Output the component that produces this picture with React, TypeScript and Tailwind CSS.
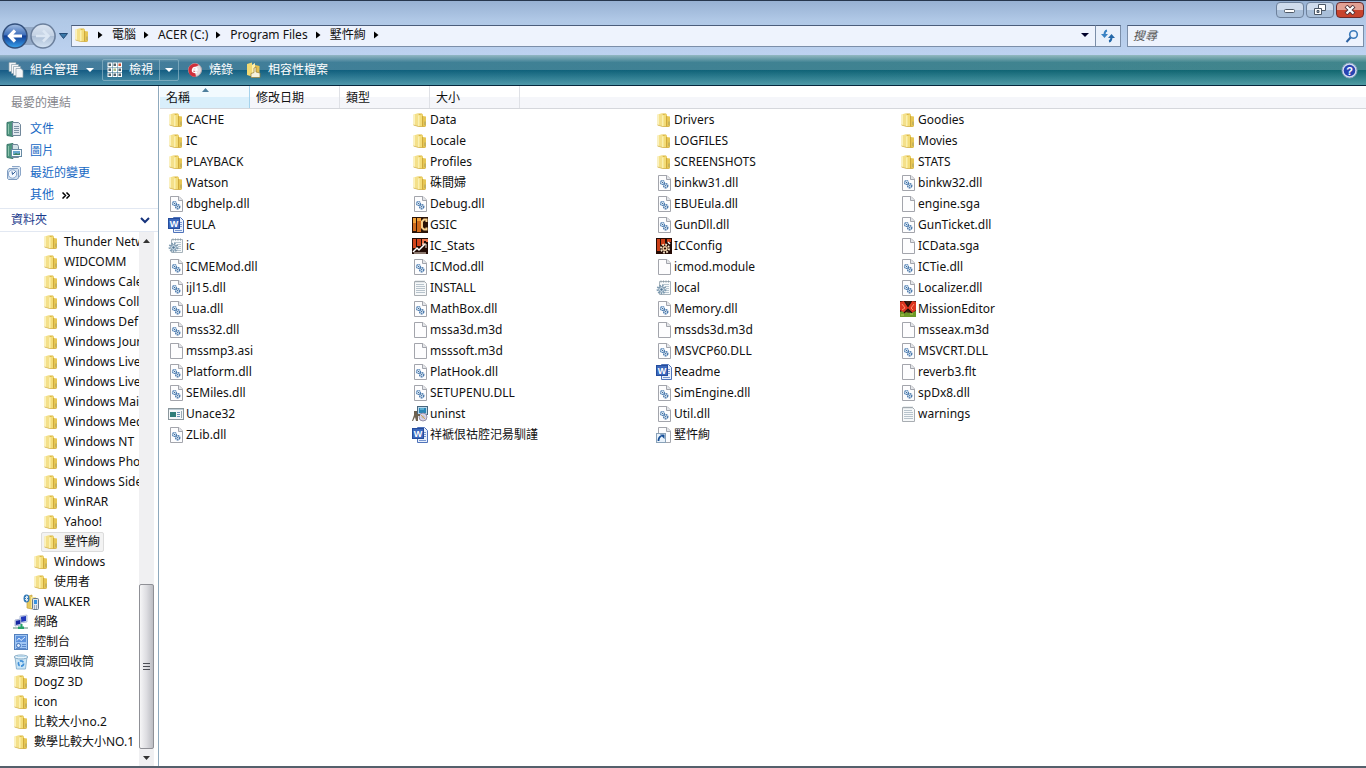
import React from "react";

type Kind =
  | "folder" | "dll" | "blank" | "word" | "config" | "text" | "exe" | "gsic"
  | "stats" | "icconfig" | "mission" | "uninst" | "shortcut"
  | "docs" | "pics" | "recent" | "phone" | "network" | "control" | "bin";

const Page = ({ children }: { children?: React.ReactNode }) => (
  <>
    <path d="M2.500.500h8.500l3.500 3.500v11.500h-12z" fill="#fdfdfe" stroke="#a3a5ac" />
    <path d="M10.500.500v4h4" fill="#e3e6ea" stroke="#a3a5ac" />
    {children}
  </>
);

const drawings: Record<Kind, React.ReactNode> = {
  folder: (
    <>
      <path d="M1.500 2.500 6.500 1v13.500l-5-1.500z" fill="#f4e08a" />
      <path d="M1.500 2.500 3 2v11.400l-1.500-.4z" fill="#fbf2bd" />
      <path d="M6.500 1.500H10L11 3v11H6.500z" fill="#dcb83f" />
      <path d="M6 3.500 10.500 2v13L6 14.500z" fill="#f3dc78" />
      <path d="M6 3.500 7.500 3v11.600L6 14.500z" fill="#fbf0b0" />
      <path d="m10.500 4 3.500.500v9.500l-1.500 1h-2z" fill="#e6c654" />
      <path d="M10.500 4v11" stroke="#c9a235" strokeWidth=".8" />
      <path d="M1.500 13l5 1.500h6l1.500-1" stroke="#d3b250" strokeWidth=".8" />
      <path d="M13 9.500v3.500" stroke="#a8a065" />
    </>
  ),
  dll: (
    <Page>
      <circle cx="6.500" cy="7.500" r="2" fill="#dcebf8" stroke="#5482b4" strokeWidth="1.200" strokeDasharray="1.600 .5" />
      <circle cx="9.700" cy="10.700" r="2.100" fill="#dcebf8" stroke="#4373a8" strokeWidth="1.300" strokeDasharray="1.700 .5" />
      <circle cx="6.500" cy="7.500" r=".6" fill="#28507f" />
      <circle cx="9.700" cy="10.700" r=".6" fill="#28507f" />
    </Page>
  ),
  blank: <Page />,
  word: (
    <>
      <path d="M5.500.500h7l3 3v12h-10z" fill="#e9f0fb" stroke="#4f73ba" />
      <path d="M11 5.500h3M11 7.500h3M11 9.500h3M7 13.500h7" stroke="#7897d1" />
      <rect x=".5" y="1.500" width="11" height="10" fill="#3b68bd" stroke="#254c9c" />
      <text x="1.800" y="9.800" fontFamily="Liberation Sans, sans-serif" fontSize="9" fontWeight="700" fill="#fff">W</text>
    </>
  ),
  config: (
    <>
      <path d="M3.500 1.500h11v13h-11z" fill="#f7fafb" stroke="#a6b2ba" />
      <path d="M5 .5v2M7.500 .5v2M10 .5v2M12.500 .5v2" stroke="#8b9ca6" />
      <path d="M6 4.500h7M9 6.500h4M10 8.500h3M10 10.500h3M9 12.500h4" stroke="#b7c6d0" />
      <circle cx="5.500" cy="9.500" r="4" fill="none" stroke="#7d9ab0" strokeWidth="1.800" strokeDasharray="1.600 1.100" />
      <circle cx="5.500" cy="9.500" r="2.800" fill="#d8e6ef" stroke="#6f8ea6" />
      <circle cx="5.500" cy="9.500" r="1.200" fill="#4d7290" />
    </>
  ),
  text: (
    <>
      <path d="M2.500 1.500h10l2 2v12h-12z" fill="#f6f8f9" stroke="#a8adb2" />
      <path d="M4 .5v2M6 .5v2M8 .5v2M10 .5v2M12 .5v2" stroke="#97a3ab" strokeWidth=".8" />
      <path d="M4 4.500h8M4 6.500h9M4 8.500h9M4 10.500h9M4 12.500h9" stroke="#b7c3cc" />
    </>
  ),
  exe: (
    <>
      <rect x=".5" y="2.500" width="15" height="11" fill="#f4f7f8" stroke="#8a969c" />
      <path d="M1 3.500h14" stroke="#bccbd4" />
      <rect x="2" y="6" width="6" height="5" fill="#2f7d78" />
      <path d="M9 6.500h3M9 8.500h3M9 10.500h3" stroke="#6b93b8" />
      <path d="M13.500 5v7" stroke="#9aaab4" />
    </>
  ),
  gsic: (
    <>
      <path d="M0 0h16v16H0z" fill="#2a1206" />
      <path d="M1 1h3v13H1zM5 1h4v14H5z" fill="#d06a1b" />
      <path d="M1 1h3v5H1zM5 1h4v3H5z" fill="#f3a33a" />
      <path d="M14.500 5V2.500H12L10 4.500v6l2 2h2.500v-2" fill="none" stroke="#f6cf8c" strokeWidth="2" />
    </>
  ),
  stats: (
    <>
      <path d="M0 0h16v16H0z" fill="#220c06" />
      <path d="M1 1h3v9H1zM5 1h4v7H5z" fill="#d3441c" />
      <path d="M15 4V2h-4v5" fill="none" stroke="#e9734a" strokeWidth="2" />
      <path d="m1 14 4-4 2 2 6-6" fill="none" stroke="#fff" strokeWidth="1.500" />
      <path d="M10 6h4v4M2 15h12" fill="none" stroke="#f3e3d5" />
    </>
  ),
  icconfig: (
    <>
      <path d="M0 0h16v16H0z" fill="#240b05" />
      <path d="M1 1h3v12H1zM5 1h4v6H5zM11 1h4v3h-4z" fill="#cc3f18" />
      <circle cx="9" cy="10.500" r="4" fill="none" stroke="#f8e7c8" strokeWidth="2" strokeDasharray="1.800 1.300" />
      <circle cx="9" cy="10.500" r="2.600" fill="#e9c9a0" />
      <circle cx="9" cy="10.500" r="1.100" fill="#240b05" />
      <path d="m12 4 2 2" stroke="#fff" strokeWidth="1.500" />
    </>
  ),
  mission: (
    <>
      <path d="M0 0h16v16H0z" fill="#3d1a0e" />
      <path d="M0 11q3-2 6 0t10-1v6H0z" fill="#6d9a28" />
      <path d="m0 1 4-1 4 6 4-6 4 1v8l-4 3-4-4-3 4-5-3z" fill="#dc3520" />
      <path d="m2 3 3 4-3 2M14 3l-3 4 2 2" fill="none" stroke="#ff8d6a" />
      <path d="m4.500 0 3.500 5.500L11.500 0M4 12l4-4 4 4" fill="none" stroke="#21100b" strokeWidth="1.200" />
      <path d="M1 14h3M10 13h3" stroke="#b9ca55" />
    </>
  ),
  uninst: (
    <>
      <rect x="5.500" y=".5" width="10" height="8" fill="#b8d8ed" stroke="#49677e" />
      <path d="M7 2h7v5H7z" fill="#2b86b6" />
      <path d="M8 3h4" stroke="#8bd6ee" />
      <circle cx="11" cy="11" r="4" fill="#d8d3e8" stroke="#827e98" strokeWidth=".8" />
      <circle cx="11" cy="11" r="1" fill="#fff" stroke="#777" strokeWidth=".5" />
      <path d="M2 5h3v3h3v2H6v5H4l-1-4-2 4H0l2-6z" fill="#6e6250" />
      <path d="m9 9 4 4" stroke="#d2a95b" />
    </>
  ),
  shortcut: (
    <>
      <Page />
      <rect x=".5" y="6.500" width="9" height="9" fill="#e9f2fb" stroke="#8aa2b8" />
      <path d="M2.500 14q0-4 3-5" fill="none" stroke="#174f97" strokeWidth="1.800" />
      <path d="M4 7.500h4.500V12z" fill="#174f97" />
    </>
  ),
  docs: (
    <>
      <path d="M1 1.500 7 .500v15l-6-1z" fill="#4f967f" stroke="#39776a" />
      <path d="M6.500 1.500h6l2 2v11h-8z" fill="#e3eaf1" stroke="#71879a" />
      <path d="M8 5.500h5M8 7.500h5M8 9.500h5M8 11.500h5" stroke="#7f93a5" />
      <path d="M2.500 3v10" stroke="#8dc3ad" />
    </>
  ),
  pics: (
    <>
      <path d="M1 1.500 7 .500v15l-6-1z" fill="#4f967f" stroke="#39776a" />
      <path d="M6.500 1.500h5l1 2v11h-6z" fill="#d4e3e8" stroke="#71879a" />
      <rect x="5.500" y="6.500" width="10" height="7" fill="#f7fbfd" stroke="#688aa3" />
      <path d="M7 8h7v4H7z" fill="#68a6cd" />
      <path d="m7 12 3-2 2 1 2-1v2z" fill="#3d8264" />
      <path d="M2.500 3v10" stroke="#8dc3ad" />
    </>
  ),
  recent: (
    <>
      <path d="M6 1.500h7.500l1 1V10l-3 4" fill="#e0eaf5" stroke="#8ba6c8" />
      <path d="M3 3.500h8.500l1 1v8l-1.500 2H2.500l-1-1v-8z" fill="#cfdeee" stroke="#7f9cc0" />
      <circle cx="6.500" cy="9" r="4.200" fill="#f2f7fd" stroke="#86a4cc" />
      <path d="m6 6.500.5 3 3-3" fill="none" stroke="#315d98" />
    </>
  ),
  phone: (
    <>
      <path d="M4 2.500 9 1v14l-5-1z" fill="#e7ca5f" stroke="#c7a43e" strokeWidth=".7" />
      <path d="M8 3h5v11H8z" fill="#f6e69a" />
      <rect x="9.500" y="4.500" width="6" height="11" rx="1" fill="#dce5ee" stroke="#65788d" />
      <path d="M11 6h3v4h-3z" fill="#3792df" />
      <path d="M11 12h1m1 0h1m-3 2h1m1 0h1" stroke="#5f7183" />
      <ellipse cx="3.500" cy="4.500" rx="3" ry="4" fill="#347ab7" />
      <path d="m2 3 3 3-1.500 1V2L5 3 2 6" fill="none" stroke="#fff" strokeWidth=".8" />
    </>
  ),
  network: (
    <>
      <path d="m7 2 7-1v7l-7 1z" fill="#dfe8f8" stroke="#9aa6cc" strokeWidth=".7" />
      <path d="m8 2.800 5-.8v5l-5 1z" fill="#2137ba" />
      <path d="m2 6 6-1v6l-6 1z" fill="#dbe5f6" stroke="#8f9bc4" strokeWidth=".7" />
      <path d="m2.800 6.800 4.500-.8v4l-4.500 1z" fill="#1426a0" />
      <path d="M0 14h15" stroke="#8eb0a5" strokeWidth="1.500" />
      <path d="M8.500 10v3" stroke="#26a269" strokeWidth="2" />
      <path d="M5 12.500h6V15H5z" fill="#26a269" />
    </>
  ),
  control: (
    <>
      <rect x="1.500" y=".5" width="13" height="15" fill="#9fc5f2" stroke="#5380bd" />
      <path d="M3 2h10v6H3z" fill="#5c91dc" />
      <path d="M4 6.500 6 4l2 2.500L12 3" fill="none" stroke="#e3f0ff" />
      <circle cx="5.500" cy="11.500" r="2" fill="#dbe9fb" stroke="#3d6fb7" />
      <path d="M9 10.500h4M9 12.500h4M3 14.500h10" stroke="#5a88cc" />
    </>
  ),
  bin: (
    <>
      <path d="m2 3 1.500 12h9L14 3z" fill="#cbe5f5" stroke="#8fb5d0" />
      <ellipse cx="8" cy="3" rx="6.800" ry="2" fill="#e8f4fb" stroke="#85aac5" />
      <path d="m3 3 3-2 2 1 3-1 2 2z" fill="#b2d4ea" />
      <circle cx="8" cy="9.500" r="2.600" fill="none" stroke="#3f8fd8" strokeWidth="1.700" strokeDasharray="4 1.400" />
    </>
  ),
};

const Icon = ({ kind }: { kind: Kind }) => (
  <svg className="h-4 w-4 shrink-0" viewBox="0 0 16 16" fill="none" aria-hidden="true">
    {drawings[kind]}
  </svg>
);

const f = (names: string, kind: Kind): Record<string, Kind> =>
  Object.fromEntries(names.split(",").map((n) => [n, kind]));

const special: Record<string, Kind> = {
  ...f("CACHE,Data,Drivers,Goodies,IC,Locale,LOGFILES,Movies,PLAYBACK,Profiles,SCREENSHOTS,STATS,Watson,硃間婦", "folder"),
  ...f("EULA,Readme,祥褫佷祜腔汜昜馴謹", "word"),
  ...f("ic,local", "config"),
  ...f("INSTALL,warnings", "text"),
  GSIC: "gsic",
  IC_Stats: "stats",
  ICConfig: "icconfig",
  MissionEditor: "mission",
  Unace32: "exe",
  uninst: "uninst",
  墅忤絢: "shortcut",
};

const kindOf = (name: string): Kind =>
  special[name] ?? (/\.dll$/i.test(name) ? "dll" : "blank");

const files = [
  "CACHE", "Data", "Drivers", "Goodies",
  "IC", "Locale", "LOGFILES", "Movies",
  "PLAYBACK", "Profiles", "SCREENSHOTS", "STATS",
  "Watson", "硃間婦", "binkw31.dll", "binkw32.dll",
  "dbghelp.dll", "Debug.dll", "EBUEula.dll", "engine.sga",
  "EULA", "GSIC", "GunDll.dll", "GunTicket.dll",
  "ic", "IC_Stats", "ICConfig", "ICData.sga",
  "ICMEMod.dll", "ICMod.dll", "icmod.module", "ICTie.dll",
  "ijl15.dll", "INSTALL", "local", "Localizer.dll",
  "Lua.dll", "MathBox.dll", "Memory.dll", "MissionEditor",
  "mss32.dll", "mssa3d.m3d", "mssds3d.m3d", "msseax.m3d",
  "mssmp3.asi", "msssoft.m3d", "MSVCP60.DLL", "MSVCRT.DLL",
  "Platform.dll", "PlatHook.dll", "Readme", "reverb3.flt",
  "SEMiles.dll", "SETUPENU.DLL", "SimEngine.dll", "spDx8.dll",
  "Unace32", "uninst", "Util.dll", "warnings",
  "ZLib.dll", "祥褫佷祜腔汜昜馴謹", "墅忤絢",
];

const indents = ["pl-[13px]", "pl-[23px]", "pl-[33px]", "pl-[43px]"];

const tree: { name: string; level: number; kind?: Kind; selected?: boolean }[] = [
  { name: "Thunder Netw", level: 3 },
  { name: "WIDCOMM", level: 3 },
  { name: "Windows Cale", level: 3 },
  { name: "Windows Coll", level: 3 },
  { name: "Windows Def", level: 3 },
  { name: "Windows Jour", level: 3 },
  { name: "Windows Live", level: 3 },
  { name: "Windows Live", level: 3 },
  { name: "Windows Mai", level: 3 },
  { name: "Windows Med", level: 3 },
  { name: "Windows NT", level: 3 },
  { name: "Windows Pho", level: 3 },
  { name: "Windows Side", level: 3 },
  { name: "WinRAR", level: 3 },
  { name: "Yahoo!", level: 3 },
  { name: "墅忤絢", level: 3, selected: true },
  { name: "Windows", level: 2 },
  { name: "使用者", level: 2 },
  { name: "WALKER", level: 1, kind: "phone" },
  { name: "網路", level: 0, kind: "network" },
  { name: "控制台", level: 0, kind: "control" },
  { name: "資源回收筒", level: 0, kind: "bin" },
  { name: "DogZ 3D", level: 0 },
  { name: "icon", level: 0 },
  { name: "比較大小no.2", level: 0 },
  { name: "數學比較大小NO.1", level: 0 },
];

const Down = ({ className }: { className: string }) => (
  <svg className={className} width="8" height="4" viewBox="0 0 8 4" fill="currentColor" aria-hidden="true">
    <path d="M0 0h8L4 4z" />
  </svg>
);

const Crumb = () => (
  <svg className="mr-[9px] ml-2 shrink-0" width="5" height="8" viewBox="0 0 5 8" aria-hidden="true">
    <path d="M0 .5v7L4.500 4z" fill="#000" />
  </svg>
);

function TitleBar() {
  const base =
    "flex h-4 w-7 items-center justify-center rounded-sm border border-[#6d819c] bg-linear-to-b from-[#cfdced] from-50% to-[#a9bfd9] to-50%";
  return (
    <header className="flex h-5 shrink-0 items-center justify-end gap-0.5 border-t border-[#26364d] bg-linear-to-b from-[#97b1d3] to-[#b0c8e6] pr-0.5 pb-0.5">
      <button aria-label="最小化" className={base}>
        <svg width="12" height="8" viewBox="0 0 12 8"><rect x=".5" y="3.500" width="10" height="3" rx="1" fill="#fff" stroke="#4d5866" /></svg>
      </button>
      <button aria-label="還原" className={base}>
        <svg width="12" height="11" viewBox="0 0 12 11" stroke="#4d5866" fill="#fff">
          <path d="M4.500.5h7v6h-7z" /><path d="M.5 4.500h7v6h-7z" /><path d="M3 6.500h2v2H3z" fill="#8da3bd" />
        </svg>
      </button>
      <button
        aria-label="關閉"
        className="flex h-4 w-7 items-center justify-center rounded-sm border border-[#6b2a2a] bg-linear-to-b from-[#e2a093] from-50% to-[#c8432c] to-50%"
      >
        <svg width="12" height="10" viewBox="0 0 12 10">
          <path d="m2 1 8 8m0-8-8 8" stroke="#4e3339" strokeWidth="4" />
          <path d="m2.500 1.500 7 7m0-7-7 7" stroke="#fff" strokeWidth="2.200" />
        </svg>
      </button>
    </header>
  );
}

function NavBar() {
  const crumbs = ["電腦", "ACER (C:)", "Program Files", "墅忤絢"];
  return (
    <nav className="flex h-[35px] shrink-0 items-center bg-linear-to-b from-[#b0c8e6] to-[#bdd2f0] pr-0.5 pb-1 pl-0.5">
      <div className="flex h-[18px] items-center gap-0.5 rounded-full bg-[#93a9c6]">
        <button aria-label="上一頁">
          <svg width="26" height="26" viewBox="0 0 26 26">
            <defs>
              <linearGradient id="back" x1="0" y1="0" x2="0" y2="1">
                <stop offset="0" stopColor="#a5bfe3" /><stop offset=".45" stopColor="#3f6fbb" />
                <stop offset=".5" stopColor="#113d95" /><stop offset="1" stopColor="#39a4ee" />
              </linearGradient>
            </defs>
            <circle cx="13" cy="13" r="12" fill="url(#back)" stroke="#33507c" strokeWidth="1.500" />
            <path d="M20 13H8m5-5.500L7.500 13l5.500 5.500" fill="none" stroke="#fff" strokeWidth="3.200" />
          </svg>
        </button>
        <button aria-label="下一頁">
          <svg width="26" height="26" viewBox="0 0 26 26">
            <defs>
              <linearGradient id="next" x1="0" y1="0" x2="0" y2="1">
                <stop offset="0" stopColor="#dbe5f2" /><stop offset=".48" stopColor="#c4d2e4" />
                <stop offset=".52" stopColor="#adbfd6" /><stop offset="1" stopColor="#d5e4f4" />
              </linearGradient>
            </defs>
            <circle cx="13" cy="13" r="12" fill="url(#next)" stroke="#6b7f9c" strokeWidth="1.500" />
            <path d="M6 13h12m-5-5.500 5.500 5.500-5.500 5.500" fill="none" stroke="#dbe6f3" strokeWidth="2.500" />
          </svg>
        </button>
      </div>
      <button aria-label="最近的頁面" className="mx-[3px]">
        <svg width="9" height="6" viewBox="0 0 9 6"><path d="M.5.500h8l-4 5z" fill="#3a78a8" stroke="#234a75" /></svg>
      </button>
      <div className="flex h-[22px] min-w-0 flex-1 items-center border border-[#7b8ea9] border-t-[#4b5d7b] bg-[#eef3fd] pb-0.5 pl-0.5">
        <Icon kind="folder" />
        {crumbs.map((c) => (
          <React.Fragment key={c}>
            <Crumb />
            <a href="#" className="whitespace-nowrap">{c}</a>
          </React.Fragment>
        ))}
        <Crumb />
        <button aria-label="先前的位置" className="ml-auto px-1.5 text-[#00002a]"><Down className="block" /></button>
      </div>
      <button aria-label="重新整理" className="flex h-[22px] w-[25px] items-center justify-center border border-l-0 border-[#7b8ea9] border-t-[#4b5d7b] bg-[#e9f0fb]">
        <svg width="14" height="14" viewBox="0 0 14 14" fill="none">
          <path d="M6 1.500Q3.500 2 3.500 6" stroke="#3a82c4" strokeWidth="2" /><path d="M0 5h7L3.500 9z" fill="#3a82c4" />
          <path d="M8 12.500q2.500-.5 2.500-4.500" stroke="#2467a8" strokeWidth="2" /><path d="M7 9h7l-3.500-4z" fill="#2467a8" />
        </svg>
      </button>
      <label className="ml-1.5 flex h-[22px] w-[237px] items-center border border-[#7b8ea9] border-t-[#4b5d7b] bg-[#eef3fd] pr-1 pl-[5px]">
        <input aria-label="搜尋" placeholder="搜尋" className="min-w-0 flex-1 bg-transparent italic outline-none placeholder:text-[#555]" />
        <svg width="14" height="14" viewBox="0 0 14 14" fill="none">
          <circle cx="8.500" cy="5.500" r="3.800" stroke="#3b7abb" strokeWidth="1.600" /><path d="m5.500 8.500-4 4.500" stroke="#2c62a2" strokeWidth="2" />
        </svg>
      </label>
    </nav>
  );
}

function Toolbar() {
  return (
    <div className="shrink-0 border-b border-[#06263c] bg-linear-to-r from-[#165a85] via-[#0f607c] via-30% to-[#11676f]">
      <div className="bg-linear-to-b from-transparent from-50% to-[#8fd0d8]/50">
        <div className="flex h-[30px] items-center bg-linear-to-b from-white/55 to-white/20 to-50% bg-[length:100%_50%] bg-no-repeat px-2 text-white">
          <div className="flex flex-1 items-center">
            <button className="flex items-center">
              <svg className="mr-1.5" width="16" height="16" viewBox="0 0 16 16" fill="#f4f6f8" stroke="#8ba0ad" strokeWidth=".7">
                <path d="M1 .5h7v9H1z" /><path d="M3.500 2.500h7v9h-7z" /><path d="M5.500 4.500h7v9h-7z" /><path d="M8 6.500h5l2 2v7H8z" />
              </svg>
              組合管理
              <Down className="ml-2" />
            </button>
            <div className="ml-2 flex h-[22px] rounded-xs border border-[#8fb7c8]/70">
              <button className="flex items-center border-r border-[#8fb7c8]/70 pr-1.5 pl-1">
                <svg className="mr-1.5" width="16" height="16" viewBox="0 0 16 16">
                  {[1, 6, 11].map((y) => [1, 6, 11].map((x) => (
                    <rect key={`${x}-${y}`} x={x} y={y} width="3.500" height="3.500" fill={x === 11 && y === 1 ? "#d25336" : x === 6 && y === 6 ? "#a8bd8a" : "#53646e"} stroke="#fff" />
                  )))}
                </svg>
                檢視
              </button>
              <button aria-label="變更檢視" className="px-[5px]"><Down className="block" /></button>
            </div>
            <button className="ml-2 flex items-center">
              <svg className="mr-1.5" width="16" height="16" viewBox="0 0 16 16" fill="none">
                <circle cx="8" cy="8" r="6.500" fill="#e6dcde" stroke="#b3a9ae" />
                <path d="M1.500 9a6.500 6.500 0 0 1 10.500-6L7 5.500 9 14.500a6 6 0 0 1-7.500-5.500" fill="#cf2f3b" />
                <path d="M6 8h4q0-2.500-2-2.500T5.500 8 8 10.500h2" stroke="#fff" strokeWidth="1.400" />
              </svg>
              燒錄
            </button>
            <button className="ml-3 flex items-center">
              <svg className="mr-1.5" width="17" height="16" viewBox="0 0 17 16">
                <path d="M2 2 7 .500v14l-5-1.500z" fill="#f2d972" /><path d="M7 3 10 1v13l-3 1z" fill="#fff0ad" />
                <path d="M10 3l4.500 1v10.500H10z" fill="#e4bf50" /><path d="M6 15.500v-4l3-1V6l2-1v5l4 1v4.500z" fill="#f7f1dc" stroke="#977c35" strokeWidth=".7" />
              </svg>
              相容性檔案
            </button>
          </div>
          <button aria-label="說明">
            <svg width="17" height="17" viewBox="0 0 17 17">
              <circle cx="8.500" cy="8.500" r="7.500" fill="#d3def2" stroke="#8ba2bf" />
              <circle cx="8.500" cy="8.500" r="5.800" fill="#2843b2" />
              <text x="8.500" y="12.500" textAnchor="middle" fontFamily="Liberation Sans, sans-serif" fontSize="11" fontWeight="700" fill="#fff">?</text>
            </svg>
          </button>
        </div>
      </div>
    </div>
  );
}

function Sidebar() {
  const links: { name: string; kind: Kind }[] = [
    { name: "文件", kind: "docs" },
    { name: "圖片", kind: "pics" },
    { name: "最近的變更", kind: "recent" },
  ];
  return (
    <aside className="flex w-[159px] shrink-0 flex-col border-r border-[#8fa9bd]">
      <h2 className="pt-[9px] pl-[11px] text-[#85868c]">最愛的連結</h2>
      <div className="mt-[7px] flex h-[90px] flex-col pl-1.5 text-[#1668c4]">
        {links.map((l) => (
          <a key={l.name} href="#" className="flex h-[22px] items-center gap-2">
            <Icon kind={l.kind} />
            {l.name}
          </a>
        ))}
        <button className="flex h-[22px] items-center gap-2 pl-6">
          其他
          <svg width="8" height="7" viewBox="0 0 8 7" fill="none" stroke="#000" strokeWidth="1.500"><path d="m.5.500 3 3-3 3m4-6 3 3-3 3" /></svg>
        </button>
      </div>
      <button className="flex h-6 shrink-0 items-center justify-between border-y border-[#e2e8f2] bg-white pr-2 pl-[11px] text-[#1a3a8c]">
        資料夾
        <svg width="10" height="7" viewBox="0 0 10 7" fill="none" stroke="#16337c" strokeWidth="2"><path d="m1 1 4 4 4-4" /></svg>
      </button>
      <div className="flex min-h-0 flex-1 pr-1">
        <ul className="min-w-0 flex-1 overflow-hidden">
          {tree.map((t, i) => (
            <li key={i} className={`flex h-5 items-center ${indents[t.level]}`}>
              <a
                href="#"
                className={
                  t.selected
                    ? "-ml-0.5 flex h-5 items-center gap-[5px] rounded-xs border border-[#dcdcdc] bg-[#f3f3f3] pr-[3px] pl-px whitespace-nowrap"
                    : "flex h-5 items-center gap-[5px] whitespace-nowrap"
                }
              >
                <Icon kind={t.kind ?? "folder"} />
                {t.name}
              </a>
            </li>
          ))}
        </ul>
        <div className="flex w-[15px] shrink-0 flex-col bg-[#f0f0f2]">
          <button aria-label="向上捲動" className="flex h-[18px] items-center justify-center">
            <svg width="7" height="4" viewBox="0 0 7 4"><path d="M0 4h7L3.500 0z" fill="#333" /></svg>
          </button>
          <div className="flex min-h-0 flex-1 flex-col justify-end">
            <div className="flex h-[33%] items-center justify-center rounded-xs border border-[#8f9096] bg-linear-to-r from-[#f6f6f7] via-[#dddde1] to-[#bcbdc3]">
              <svg width="7" height="8" viewBox="0 0 7 8"><path d="M0 .5h7M0 3.500h7M0 6.500h7" stroke="#4c4e55" /></svg>
            </div>
          </div>
          <button aria-label="向下捲動" className="flex h-[17px] items-center justify-center">
            <svg width="7" height="4" viewBox="0 0 7 4"><path d="M0 0h7L3.500 4z" fill="#333" /></svg>
          </button>
        </div>
      </div>
    </aside>
  );
}

function FileList() {
  return (
    <main className="flex min-w-0 flex-1 flex-col pl-px">
      <div className="flex h-[23px] shrink-0 border-b border-[#d5d7dc] bg-linear-to-b from-white from-50% to-[#f5f6fa] to-50%">
        {["名稱", "修改日期", "類型", "大小"].map((h, i) => (
          <button
            key={h}
            className={
              i === 0
                ? "relative w-[90px] border-r border-[#a5d3ec] bg-linear-to-b from-[#f2fafe] from-50% to-[#d9effb] to-50% pt-0.5 pl-1.5 text-left"
                : "w-[90px] border-r border-[#dfe1e6] pt-0.5 pl-1.5 text-left"
            }
          >
            {h}
            {i === 0 && (
              <svg className="absolute top-0.5 left-[42px]" width="7" height="4" viewBox="0 0 7 4"><path d="M0 4h7L3.500 0z" fill="#4e7f9d" /></svg>
            )}
          </button>
        ))}
      </div>
      <ul className="grid grid-cols-[repeat(auto-fill,244px)] pl-2">
        {files.map((name) => (
          <li key={name} className="h-[21px]">
            <a href="#" className="flex h-[21px] items-center gap-0.5 whitespace-nowrap">
              <Icon kind={kindOf(name)} />
              {name}
            </a>
          </li>
        ))}
      </ul>
    </main>
  );
}

export default function App() {
  return (
    <div className="flex h-screen flex-col overflow-hidden bg-white font-['Noto_Sans','Noto_Sans_CJK_TC',sans-serif] text-[12px] leading-4 text-[#111]">
      <TitleBar />
      <NavBar />
      <Toolbar />
      <div className="flex min-h-0 flex-1 border-b-2 border-[#55606c]">
        <Sidebar />
        <FileList />
      </div>
    </div>
  );
}
